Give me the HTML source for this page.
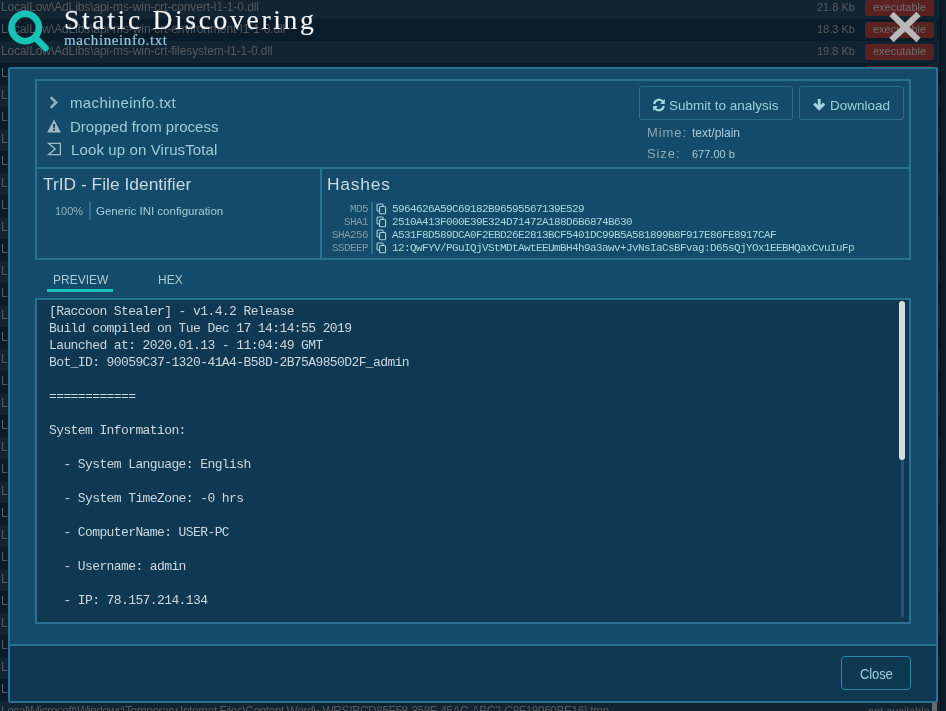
<!DOCTYPE html>
<html><head><meta charset="utf-8">
<style>
*{margin:0;padding:0;box-sizing:border-box}
.txt,.path,.sz,.pre,.bdt{will-change:transform}
html,body{width:946px;height:711px;overflow:hidden;background:#0b1b27;font-family:"Liberation Sans",sans-serif}
.abs{position:absolute}
.row{position:absolute;left:0;width:940px;height:22px}
.row.l{background:#122331}
.row.d{background:#0a1c29}
.path{position:absolute;top:-1px;left:1px;font-size:12px;letter-spacing:-0.1px;color:#54595d;white-space:nowrap;line-height:22px}
.sz{position:absolute;top:-1px;right:85px;font-size:11px;color:#585c5f;line-height:22px;white-space:nowrap}
.bdt{display:block}
.badge{position:absolute;left:865px;width:69px;height:15.5px;background:#5a2121;border-radius:3px;color:#706e6e;font-size:11px;line-height:14px;text-align:center}
#vscroll{position:absolute;left:940px;top:0;width:6px;height:711px;background:#0b1c28;border-left:1px solid #050e15}
#modal{position:absolute;left:8px;top:67px;width:930px;height:636px;border:2px solid #29718f;background:#154b6a;border-radius:2px}
.box{position:absolute;border:2px solid #29718f}
.txt{position:absolute;white-space:nowrap}
.t1{font-size:15px;color:#9fcbd9;line-height:18px}
.btn{position:absolute;border:1px solid #2b6f8f;border-radius:3px}
.bt{font-size:13.5px;color:#9dcfda;line-height:16px}
.lbl{font-size:13px;letter-spacing:0.9px;color:#8aa7b5;line-height:16px}
.val{font-size:12px;color:#a5c9d5;line-height:16px}
.h3{font-size:17.4px;color:#c7d9e1;line-height:20px}
.hl{font-family:"Liberation Mono",monospace;font-size:11px;letter-spacing:-0.6px;color:#7f9aaa;line-height:13px;text-align:right}
.hv{font-family:"Liberation Mono",monospace;font-size:11px;letter-spacing:-0.6px;color:#a8d6e0;line-height:13px}
.tab{font-size:12px;transform:scaleY(1.12);transform-origin:0 100%;color:#a9c9d5;line-height:16px}
.pre{font-family:"Liberation Mono",monospace;font-size:13px;letter-spacing:-0.6px;color:#cad7df;line-height:17px}
</style></head><body>
<div id="bg">
<div class="row l" style="top:-3px"><span class="path">LocalLow\AdLibs\api-ms-win-crt-convert-l1-1-0.dll</span><span class="sz">21.8 Kb</span><span class="badge" style="top:3px"><span class="bdt">executable</span></span></div>
<div class="row d" style="top:19px"><span class="path">LocalLow\AdLibs\api-ms-win-crt-environment-l1-1-0.dll</span><span class="sz">18.3 Kb</span><span class="badge" style="top:3px"><span class="bdt">executable</span></span></div>
<div class="row l" style="top:41px"><span class="path">LocalLow\AdLibs\api-ms-win-crt-filesystem-l1-1-0.dll</span><span class="sz">19.8 Kb</span><span class="badge" style="top:3px"><span class="bdt">executable</span></span></div>
<div class="row d" style="top:63px"><span class="path">LocalLow\AdLibs\api-ms-win-crt-heap-l1-1-0.dll</span><span class="sz">20.1 Kb</span><span class="badge" style="top:3px"><span class="bdt">executable</span></span></div>
<div class="row l" style="top:85px"><span class="path">LocalLow\AdLibs\api-ms-win-crt-heap-l1-1-0.dll</span><span class="sz">20.1 Kb</span><span class="badge" style="top:3px"><span class="bdt">executable</span></span></div>
<div class="row d" style="top:107px"><span class="path">LocalLow\AdLibs\api-ms-win-crt-heap-l1-1-0.dll</span><span class="sz">20.1 Kb</span><span class="badge" style="top:3px"><span class="bdt">executable</span></span></div>
<div class="row l" style="top:129px"><span class="path">LocalLow\AdLibs\api-ms-win-crt-heap-l1-1-0.dll</span><span class="sz">20.1 Kb</span><span class="badge" style="top:3px"><span class="bdt">executable</span></span></div>
<div class="row d" style="top:151px"><span class="path">LocalLow\AdLibs\api-ms-win-crt-heap-l1-1-0.dll</span><span class="sz">20.1 Kb</span><span class="badge" style="top:3px"><span class="bdt">executable</span></span></div>
<div class="row l" style="top:173px"><span class="path">LocalLow\AdLibs\api-ms-win-crt-heap-l1-1-0.dll</span><span class="sz">20.1 Kb</span><span class="badge" style="top:3px"><span class="bdt">executable</span></span></div>
<div class="row d" style="top:195px"><span class="path">LocalLow\AdLibs\api-ms-win-crt-heap-l1-1-0.dll</span><span class="sz">20.1 Kb</span><span class="badge" style="top:3px"><span class="bdt">executable</span></span></div>
<div class="row l" style="top:217px"><span class="path">LocalLow\AdLibs\api-ms-win-crt-heap-l1-1-0.dll</span><span class="sz">20.1 Kb</span><span class="badge" style="top:3px"><span class="bdt">executable</span></span></div>
<div class="row d" style="top:239px"><span class="path">LocalLow\AdLibs\api-ms-win-crt-heap-l1-1-0.dll</span><span class="sz">20.1 Kb</span><span class="badge" style="top:3px"><span class="bdt">executable</span></span></div>
<div class="row l" style="top:261px"><span class="path">LocalLow\AdLibs\api-ms-win-crt-heap-l1-1-0.dll</span><span class="sz">20.1 Kb</span><span class="badge" style="top:3px"><span class="bdt">executable</span></span></div>
<div class="row d" style="top:283px"><span class="path">LocalLow\AdLibs\api-ms-win-crt-heap-l1-1-0.dll</span><span class="sz">20.1 Kb</span><span class="badge" style="top:3px"><span class="bdt">executable</span></span></div>
<div class="row l" style="top:305px"><span class="path">LocalLow\AdLibs\api-ms-win-crt-heap-l1-1-0.dll</span><span class="sz">20.1 Kb</span><span class="badge" style="top:3px"><span class="bdt">executable</span></span></div>
<div class="row d" style="top:327px"><span class="path">LocalLow\AdLibs\api-ms-win-crt-heap-l1-1-0.dll</span><span class="sz">20.1 Kb</span><span class="badge" style="top:3px"><span class="bdt">executable</span></span></div>
<div class="row l" style="top:349px"><span class="path">LocalLow\AdLibs\api-ms-win-crt-heap-l1-1-0.dll</span><span class="sz">20.1 Kb</span><span class="badge" style="top:3px"><span class="bdt">executable</span></span></div>
<div class="row d" style="top:371px"><span class="path">LocalLow\AdLibs\api-ms-win-crt-heap-l1-1-0.dll</span><span class="sz">20.1 Kb</span><span class="badge" style="top:3px"><span class="bdt">executable</span></span></div>
<div class="row l" style="top:393px"><span class="path">LocalLow\AdLibs\api-ms-win-crt-heap-l1-1-0.dll</span><span class="sz">20.1 Kb</span><span class="badge" style="top:3px"><span class="bdt">executable</span></span></div>
<div class="row d" style="top:415px"><span class="path">LocalLow\AdLibs\api-ms-win-crt-heap-l1-1-0.dll</span><span class="sz">20.1 Kb</span><span class="badge" style="top:3px"><span class="bdt">executable</span></span></div>
<div class="row l" style="top:437px"><span class="path">LocalLow\AdLibs\api-ms-win-crt-heap-l1-1-0.dll</span><span class="sz">20.1 Kb</span><span class="badge" style="top:3px"><span class="bdt">executable</span></span></div>
<div class="row d" style="top:459px"><span class="path">LocalLow\AdLibs\api-ms-win-crt-heap-l1-1-0.dll</span><span class="sz">20.1 Kb</span><span class="badge" style="top:3px"><span class="bdt">executable</span></span></div>
<div class="row l" style="top:481px"><span class="path">LocalLow\AdLibs\api-ms-win-crt-heap-l1-1-0.dll</span><span class="sz">20.1 Kb</span><span class="badge" style="top:3px"><span class="bdt">executable</span></span></div>
<div class="row d" style="top:503px"><span class="path">LocalLow\AdLibs\api-ms-win-crt-heap-l1-1-0.dll</span><span class="sz">20.1 Kb</span><span class="badge" style="top:3px"><span class="bdt">executable</span></span></div>
<div class="row l" style="top:525px"><span class="path">LocalLow\AdLibs\api-ms-win-crt-heap-l1-1-0.dll</span><span class="sz">20.1 Kb</span><span class="badge" style="top:3px"><span class="bdt">executable</span></span></div>
<div class="row d" style="top:547px"><span class="path">LocalLow\AdLibs\api-ms-win-crt-heap-l1-1-0.dll</span><span class="sz">20.1 Kb</span><span class="badge" style="top:3px"><span class="bdt">executable</span></span></div>
<div class="row l" style="top:569px"><span class="path">LocalLow\AdLibs\api-ms-win-crt-heap-l1-1-0.dll</span><span class="sz">20.1 Kb</span><span class="badge" style="top:3px"><span class="bdt">executable</span></span></div>
<div class="row d" style="top:591px"><span class="path">LocalLow\AdLibs\api-ms-win-crt-heap-l1-1-0.dll</span><span class="sz">20.1 Kb</span><span class="badge" style="top:3px"><span class="bdt">executable</span></span></div>
<div class="row l" style="top:613px"><span class="path">LocalLow\AdLibs\api-ms-win-crt-heap-l1-1-0.dll</span><span class="sz">20.1 Kb</span><span class="badge" style="top:3px"><span class="bdt">executable</span></span></div>
<div class="row d" style="top:635px"><span class="path">LocalLow\AdLibs\api-ms-win-crt-heap-l1-1-0.dll</span><span class="sz">20.1 Kb</span><span class="badge" style="top:3px"><span class="bdt">executable</span></span></div>
<div class="row l" style="top:657px"><span class="path">LocalLow\AdLibs\api-ms-win-crt-heap-l1-1-0.dll</span><span class="sz">20.1 Kb</span><span class="badge" style="top:3px"><span class="bdt">executable</span></span></div>
<div class="row d" style="top:679px"><span class="path">LocalLow\AdLibs\api-ms-win-crt-heap-l1-1-0.dll</span><span class="sz">20.1 Kb</span><span class="badge" style="top:3px"><span class="bdt">executable</span></span></div>
<div class="row l" style="top:701px"><span class="path" style="letter-spacing:-0.5px">Local\Microsoft\Windows\Temporary Internet Files\Content.Word\~WRS{BCD85F58-358F-45AC-ABC2-C8F18960BE16}.tmp</span><span class="sz" style="right:10px">not available</span></div>
</div>
<div class="abs" style="left:934px;top:0;width:3px;height:711px;background:#0b2333"></div>
<div id="vscroll"></div>

<!-- header -->
<svg class="abs" style="left:0;top:0" width="60" height="60" viewBox="0 0 60 60">
  <circle cx="25.2" cy="27.5" r="13.7" fill="none" stroke="#16c3b4" stroke-width="6.6"/>
  <line x1="36" y1="38.5" x2="45.5" y2="48" stroke="#16c3b4" stroke-width="6.6" stroke-linecap="round"/>
</svg>
<div class="txt" style="left:64px;top:4px;font-family:'Liberation Serif',serif;font-size:27.5px;letter-spacing:2.7px;color:#f2f4f5;line-height:32px;-webkit-text-stroke:0.15px #f2f4f5">Static Discovering</div>
<div class="txt" style="left:64px;top:31px;font-family:'Liberation Serif',serif;font-size:15px;letter-spacing:0.6px;color:#8fc6dc;line-height:18px;-webkit-text-stroke:0.2px #8fc6dc">machineinfo.txt</div>
<svg class="abs" style="left:886px;top:9px" width="38" height="37" viewBox="0 0 38 37">
  <path d="M5.5 5 L32.5 31 M32.5 5 L5.5 31" stroke="#b8b8b8" stroke-width="6"/>
</svg>

<div id="modal"></div>
<!-- top info box -->
<div class="box" style="left:35px;top:79px;width:876px;height:181px"></div>
<div class="abs" style="left:37px;top:167px;width:872px;height:2px;background:#29718f"></div>
<div class="abs" style="left:320px;top:169px;width:2px;height:89px;background:#29718f"></div>

<svg class="abs" style="left:46px;top:96px" width="14" height="14" viewBox="0 0 14 14"><path d="M4.7 1.1 L10.1 6.5 L4.7 11.9" fill="none" stroke="#8fb3c2" stroke-width="2.5"/></svg>
<div class="txt t1" style="left:70px;top:94px;letter-spacing:0.35px">machineinfo.txt</div>
<svg class="abs" style="left:46px;top:119px" width="16" height="15" viewBox="0 0 16 15"><path d="M8 0.6 L14.9 13.6 L1.1 13.6 Z" fill="#9fbac6"/><rect x="7" y="5" width="2" height="3.8" fill="#154b6a"/><rect x="7" y="9.8" width="2" height="1.9" fill="#154b6a"/></svg>
<div class="txt t1" style="left:70px;top:118px">Dropped from process</div>
<svg class="abs" style="left:46px;top:142px" width="16" height="15" viewBox="0 0 16 15"><path d="M2.6 1.3 H14.4 V12.7 H2.6 L9.2 7 Z" fill="none" stroke="#9fbac6" stroke-width="1.3" stroke-linejoin="miter"/></svg>
<div class="txt t1" style="left:71px;top:141px;letter-spacing:0.12px">Look up on VirusTotal</div>

<div class="btn" style="left:639px;top:86px;width:154px;height:34px"></div>
<svg class="abs" style="left:652px;top:98px" width="14" height="14" viewBox="0 0 14 14"><path d="M2.2 6 A5 5 0 0 1 11.3 4" fill="none" stroke="#a4d4de" stroke-width="2.2"/><path d="M12.8 1 V6 H8 Z" fill="#a4d4de"/><path d="M11.8 8 A5 5 0 0 1 2.7 10" fill="none" stroke="#a4d4de" stroke-width="2.2"/><path d="M1.2 13 V8 H6 Z" fill="#a4d4de"/></svg>
<div class="txt bt" style="left:669px;top:98px">Submit to analysis</div>
<div class="btn" style="left:799px;top:86px;width:105px;height:34px"></div>
<svg class="abs" style="left:812px;top:98px" width="14" height="14" viewBox="0 0 14 14"><path d="M7.2 1 V9.5" stroke="#a4d4de" stroke-width="2.9"/><path d="M2.2 5.6 L7.2 10.6 L12.2 5.6" fill="none" stroke="#a4d4de" stroke-width="2.9"/></svg>
<div class="txt bt" style="left:830px;top:98px">Download</div>

<div class="txt lbl" style="left:647px;top:125px">Mime:</div>
<div class="txt val" style="left:692px;top:125.2px">text/plain</div>
<div class="txt lbl" style="left:647px;top:146px">Size:</div>
<div class="txt val" style="left:692px;top:146.3px;font-size:11px">677.00 b</div>

<div class="txt h3" style="left:43px;top:174px">TrID - File Identifier</div>
<div class="txt" style="left:55px;top:205px;font-size:11px;color:#8fb2c2">100%</div>
<div class="abs" style="left:89px;top:202px;width:2px;height:18px;background:#29718f"></div>
<div class="txt" style="left:96px;top:205px;font-size:11.5px;color:#a2cdda">Generic INI configuration</div>

<div class="txt h3" style="left:327px;top:174px;letter-spacing:0.8px">Hashes</div>
<div class="abs" style="left:371px;top:202px;width:2px;height:52px;background:#29718f"></div>
<div class="txt hl" style="right:578px;top:202.5px">MD5<br>SHA1<br>SHA256<br>SSDEEP</div>
<svg class="abs" style="left:376px;top:202.5px" width="11" height="52" viewBox="0 0 11 52"><g fill="none" stroke="#a8d0dc" stroke-width="1.1"><rect x="1.05" y="1.05" width="6" height="7" rx="1"/><rect x="3.55" y="3.55" width="6" height="7.2" rx="1" fill="#154b6a"/><rect x="1.05" y="14.05" width="6" height="7" rx="1"/><rect x="3.55" y="16.55" width="6" height="7.2" rx="1" fill="#154b6a"/><rect x="1.05" y="27.05" width="6" height="7" rx="1"/><rect x="3.55" y="29.55" width="6" height="7.2" rx="1" fill="#154b6a"/><rect x="1.05" y="40.05" width="6" height="7" rx="1"/><rect x="3.55" y="42.55" width="6" height="7.2" rx="1" fill="#154b6a"/></g></svg>
<div class="txt hv" style="left:392px;top:202.5px">5964626A59C69182B96595567139E529<br>2510A413F000E39E324D71472A188D6B6874B630<br>A531F8D589DCA0F2EBD26E2813BCF5401DC99B5A581899B8F917E86FE8917CAF<br>12:QwFYV/PGuIQjVStMDtAwtEEUmBH4h9a3awv+JvNsIaCsBFvag:D65sQjYOx1EEBHQaxCvuIuFp</div>

<div class="txt tab" style="left:53px;top:272px">PREVIEW</div>
<div class="abs" style="left:47px;top:289px;width:66px;height:3px;background:#16c3b4"></div>
<div class="txt tab" style="left:158px;top:272px">HEX</div>

<div class="box" style="left:35px;top:298px;width:876px;height:326px;background:#0f3953"></div>
<pre class="abs pre" style="left:49px;top:303px">[Raccoon Stealer] - v1.4.2 Release
Build compiled on Tue Dec 17 14:14:55 2019
Launched at: 2020.01.13 - 11:04:49 GMT
Bot_ID: 90059C37-1320-41A4-B58D-2B75A9850D2F_admin

============

System Information:

  - System Language: English

  - System TimeZone: -0 hrs

  - ComputerName: USER-PC

  - Username: admin

  - IP: 78.157.214.134</pre>
<div class="abs" style="left:900.5px;top:455px;width:3.5px;height:162px;background:#1d5577;border-radius:2px"></div>
<div class="abs" style="left:899px;top:301px;width:5.5px;height:159px;background:#d5dde2;border-radius:3px"></div>

<div class="abs" style="left:10px;top:644px;width:926px;height:57px;background:#0f3953;border-top:2px solid #29718f"></div>
<div class="btn" style="left:841px;top:656px;width:70px;height:34px;border-color:#2a88ad;border-radius:4px"></div>
<div class="txt bt" style="left:860px;top:665.7px;font-size:13px;letter-spacing:-0.1px;transform:scaleY(1.1);transform-origin:0 0">Close</div>
<div class="abs" style="left:932px;top:703px;width:5px;height:8px;background:#6b6b6b"></div>
</body></html>
